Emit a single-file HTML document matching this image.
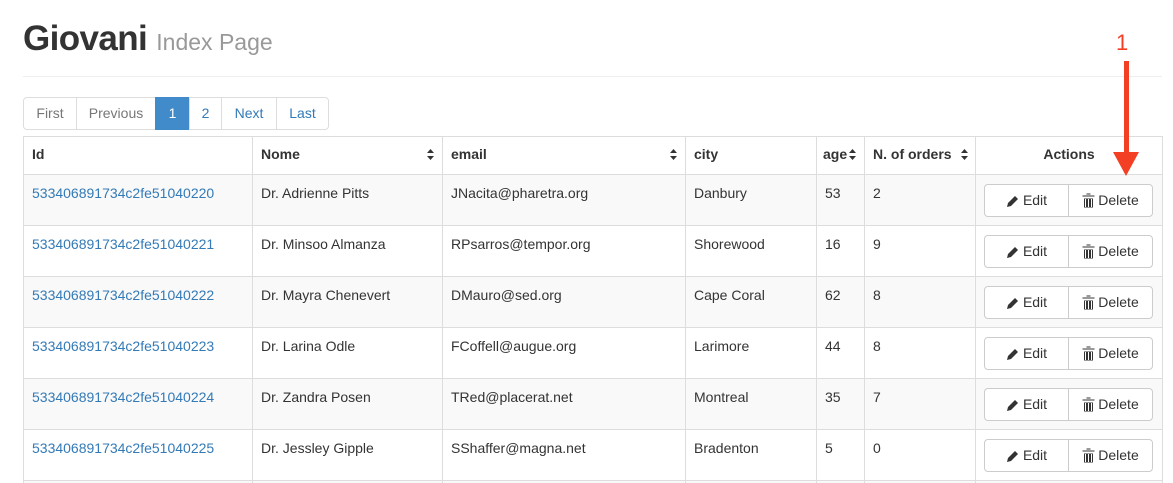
<!DOCTYPE html>
<html><head><style>
*{box-sizing:border-box}
html,body{margin:0;width:1173px;height:483px;overflow:hidden}
body{background:#fff;font-family:"Liberation Sans",sans-serif;font-size:14px;color:#333;position:relative}
h1{position:absolute;left:23px;top:19px;margin:0;font-size:35px;font-weight:bold;line-height:40px;letter-spacing:-0.6px}
h1 small{font-size:23px;color:#999;font-weight:400;letter-spacing:0}
.hr{position:absolute;left:23px;right:11px;top:76px;border-top:1px solid #eee}
.pg{position:absolute;left:23px;top:97px;display:flex;height:33px}
.pg span{border:1px solid #ddd;margin-left:-1px;height:33px;line-height:31px;text-align:center;color:#337ab7}
.pg .d{color:#777}
.pg .a{background:#428bca;border-color:#428bca;color:#fff}
table{position:absolute;left:23px;top:136px;border-collapse:collapse;width:1140px}
td,th{border:1px solid #ddd;padding:0 8px;text-align:left;vertical-align:top}
th{height:38px;line-height:35px;border-bottom:2px solid #ddd}
td{height:51px;padding-top:8px;line-height:20px}
tr.o td{background:#f9f9f9}
td a{color:#337ab7}
.bg{display:flex;margin-top:1px}
.bg span{border:1px solid #ccc;height:33px;line-height:31px;background:#fff;text-align:center;border-radius:4px 0 0 4px;display:flex;align-items:center;justify-content:center;gap:3px}
.bg span+span{border-radius:0 4px 4px 0;margin-left:-1px}
</style></head><body>
<h1>Giovani <small>Index Page</small></h1>
<div class="hr"></div>
<div class="pg"><span class="d" style="width:54px;margin-left:0;border-radius:4px 0 0 4px">First</span><span class="d" style="width:80px">Previous</span><span class="a" style="width:35px">1</span><span style="width:33px">2</span><span style="width:56px">Next</span><span style="width:53px;border-radius:0 4px 4px 0">Last</span></div>
<table>
<tr><th style="width:229px">Id</th><th style="width:190px">Nome</th><th style="width:243px">email</th><th style="width:131px">city</th><th style="width:48px;padding:0 6px">age</th><th style="width:111px">N. of orders</th><th style="text-align:center">Actions</th></tr>
</table>
<svg style="position:absolute;left:0;top:0" width="1173" height="483">
<g fill="#333">
<path d="M427 153l3.5 -4 3.5 4zM427 156l3.5 4 3.5-4z"/>
<path d="M670 153l3.5 -4 3.5 4zM670 156l3.5 4 3.5-4z"/>
<path d="M849 153l3.5 -4 3.5 4zM849 156l3.5 4 3.5-4z"/>
<path d="M961 153l3.5 -4 3.5 4zM961 156l3.5 4 3.5-4z"/>
</g>
</svg>
<table style="top:174px">
<tr class="o"><td style="width:229px"><a>533406891734c2fe51040220</a></td><td style="width:190px">Dr. Adrienne Pitts</td><td style="width:243px">JNacita@pharetra.org</td><td style="width:131px">Danbury</td><td style="width:48px">53</td><td style="width:111px">2</td><td><div class="bg"><span style="width:85px"><svg width="14" height="14" viewBox="0 0 14 14"><path d="M1 13l1-4 7-7 3 3-7 7z" fill="#333"/></svg>Edit</span><span style="width:85px"><svg width="13" height="15" viewBox="0 0 13 15"><path d="M0 2h13v2H0zM4 0h5v2H4zM1.5 5h10v10h-10zM3.5 6v8M6.5 6v8M9.5 6v8" fill="#333" stroke="#fff" stroke-width="1"/></svg>Delete</span></div></td></tr>
<tr><td><a>533406891734c2fe51040221</a></td><td>Dr. Minsoo Almanza</td><td>RPsarros@tempor.org</td><td>Shorewood</td><td>16</td><td>9</td><td><div class="bg"><span style="width:85px"><svg width="14" height="14" viewBox="0 0 14 14"><path d="M1 13l1-4 7-7 3 3-7 7z" fill="#333"/></svg>Edit</span><span style="width:85px"><svg width="13" height="15" viewBox="0 0 13 15"><path d="M0 2h13v2H0zM4 0h5v2H4zM1.5 5h10v10h-10zM3.5 6v8M6.5 6v8M9.5 6v8" fill="#333" stroke="#fff" stroke-width="1"/></svg>Delete</span></div></td></tr>
<tr class="o"><td><a>533406891734c2fe51040222</a></td><td>Dr. Mayra Chenevert</td><td>DMauro@sed.org</td><td>Cape Coral</td><td>62</td><td>8</td><td><div class="bg"><span style="width:85px"><svg width="14" height="14" viewBox="0 0 14 14"><path d="M1 13l1-4 7-7 3 3-7 7z" fill="#333"/></svg>Edit</span><span style="width:85px"><svg width="13" height="15" viewBox="0 0 13 15"><path d="M0 2h13v2H0zM4 0h5v2H4zM1.5 5h10v10h-10zM3.5 6v8M6.5 6v8M9.5 6v8" fill="#333" stroke="#fff" stroke-width="1"/></svg>Delete</span></div></td></tr>
<tr><td><a>533406891734c2fe51040223</a></td><td>Dr. Larina Odle</td><td>FCoffell@augue.org</td><td>Larimore</td><td>44</td><td>8</td><td><div class="bg"><span style="width:85px"><svg width="14" height="14" viewBox="0 0 14 14"><path d="M1 13l1-4 7-7 3 3-7 7z" fill="#333"/></svg>Edit</span><span style="width:85px"><svg width="13" height="15" viewBox="0 0 13 15"><path d="M0 2h13v2H0zM4 0h5v2H4zM1.5 5h10v10h-10zM3.5 6v8M6.5 6v8M9.5 6v8" fill="#333" stroke="#fff" stroke-width="1"/></svg>Delete</span></div></td></tr>
<tr class="o"><td><a>533406891734c2fe51040224</a></td><td>Dr. Zandra Posen</td><td>TRed@placerat.net</td><td>Montreal</td><td>35</td><td>7</td><td><div class="bg"><span style="width:85px"><svg width="14" height="14" viewBox="0 0 14 14"><path d="M1 13l1-4 7-7 3 3-7 7z" fill="#333"/></svg>Edit</span><span style="width:85px"><svg width="13" height="15" viewBox="0 0 13 15"><path d="M0 2h13v2H0zM4 0h5v2H4zM1.5 5h10v10h-10zM3.5 6v8M6.5 6v8M9.5 6v8" fill="#333" stroke="#fff" stroke-width="1"/></svg>Delete</span></div></td></tr>
<tr><td><a>533406891734c2fe51040225</a></td><td>Dr. Jessley Gipple</td><td>SShaffer@magna.net</td><td>Bradenton</td><td>5</td><td>0</td><td><div class="bg"><span style="width:85px"><svg width="14" height="14" viewBox="0 0 14 14"><path d="M1 13l1-4 7-7 3 3-7 7z" fill="#333"/></svg>Edit</span><span style="width:85px"><svg width="13" height="15" viewBox="0 0 13 15"><path d="M0 2h13v2H0zM4 0h5v2H4zM1.5 5h10v10h-10zM3.5 6v8M6.5 6v8M9.5 6v8" fill="#333" stroke="#fff" stroke-width="1"/></svg>Delete</span></div></td></tr>
<tr class="o"><td style="height:3px;padding:0"></td><td style="padding:0"></td><td style="padding:0"></td><td style="padding:0"></td><td style="padding:0"></td><td style="padding:0"></td><td style="padding:0"></td></tr>
</table>
<div style="position:absolute;left:1116px;top:30px;color:#f34025;font-size:22px">1</div>
<svg style="position:absolute;left:0;top:0" width="1173" height="483">
<rect x="1124" y="61" width="5" height="94" fill="#f34025"/>
<path d="M1113 152h26l-13 24z" fill="#f34025"/>
</svg>
</body></html>
